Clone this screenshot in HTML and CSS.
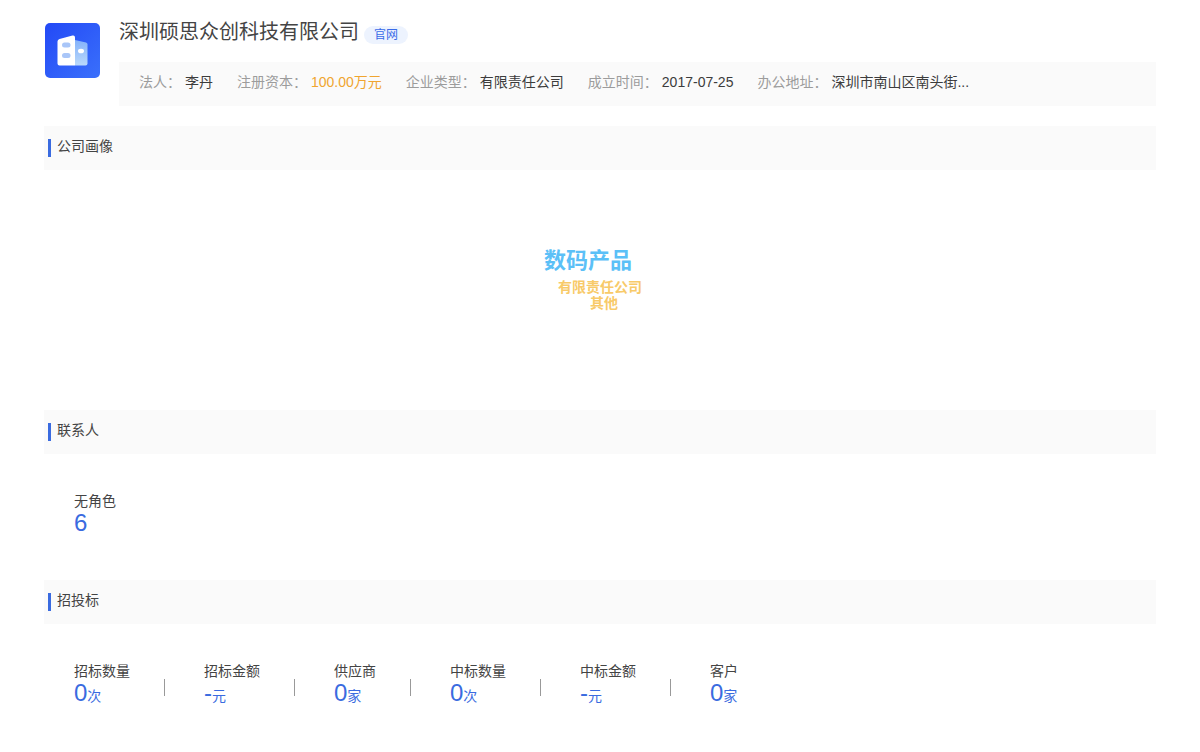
FILE: index.html
```html
<!DOCTYPE html>
<html lang="zh-CN">
<head>
<meta charset="utf-8">
<meta name="viewport" content="width=device-width, initial-scale=1">
<title>深圳硕思众创科技有限公司</title>
<link rel="stylesheet" href="styles.css">
</head>
<body>
<main class="page">
  <header class="company">
    <svg class="logo" viewBox="0 0 56 56" aria-hidden="true">
      <defs>
        <linearGradient id="tile" x1="0" y1="0" x2="1" y2="1">
          <stop offset="0" stop-color="#2349f6"/>
          <stop offset="1" stop-color="#3a70fb"/>
        </linearGradient>
        <linearGradient id="wing" x1="0" y1="0" x2="0" y2="1">
          <stop offset="0" stop-color="#84b2fa"/>
          <stop offset="1" stop-color="#b9d8fb"/>
        </linearGradient>
      </defs>
      <rect x="1" y="1" width="55" height="55" rx="5" fill="url(#tile)"/>
      <path d="M31 18 42 20.500Q43.500 21 43.500 22.500V41.500Q43.500 43.500 41.500 43.500H31Z" fill="url(#wing)"/>
      <path d="M15.500 17 28.500 13.500Q31 13 31 15.500V43.500H15.500Q13.500 43.500 13.500 41.500V19.500Q13.500 17.500 15.500 17Z" fill="#fff"/>
      <rect x="18" y="20.500" width="8.500" height="5" rx="2.500" fill="#a9c6f8"/>
      <rect x="18" y="31" width="8.500" height="5" rx="2.500" fill="#a9c6f8"/>
      <ellipse cx="37" cy="29" rx="3" ry="2.300" fill="#fff"/>
    </svg>
    <div class="company-body">
      <div class="title-row">
        <h1 class="title">深圳硕思众创科技有限公司</h1>
        <a class="site-link" href="#">官网</a>
      </div>
      <dl class="meta">
        <div class="meta-item"><dt>法人：</dt><dd>李丹</dd></div>
        <div class="meta-item"><dt>注册资本：</dt><dd class="money">100.00万元</dd></div>
        <div class="meta-item"><dt>企业类型：</dt><dd>有限责任公司</dd></div>
        <div class="meta-item"><dt>成立时间：</dt><dd>2017-07-25</dd></div>
        <div class="meta-item"><dt>办公地址：</dt><dd>深圳市南山区南头街...</dd></div>
      </dl>
    </div>
  </header>

  <section>
    <h2 class="section-title">公司画像</h2>
    <div class="cloud">
      <span class="word word-product">数码产品</span>
      <span class="word word-type">有限责任公司</span>
      <span class="word word-other">其他</span>
    </div>
  </section>

  <section>
    <h2 class="section-title">联系人</h2>
    <dl class="stats">
      <div class="stat"><dt>无角色</dt><dd>6</dd></div>
    </dl>
  </section>

  <section>
    <h2 class="section-title">招投标</h2>
    <dl class="stats">
      <div class="stat"><dt>招标数量</dt><dd>0<small>次</small></dd></div>
      <div class="stat"><dt>招标金额</dt><dd>-<small>元</small></dd></div>
      <div class="stat"><dt>供应商</dt><dd>0<small>家</small></dd></div>
      <div class="stat"><dt>中标数量</dt><dd>0<small>次</small></dd></div>
      <div class="stat"><dt>中标金额</dt><dd>-<small>元</small></dd></div>
      <div class="stat"><dt>客户</dt><dd>0<small>家</small></dd></div>
    </dl>
  </section>
</main>
</body>
</html>
```
FILE: styles.css
```css
* {
  box-sizing: border-box;
  margin: 0;
  padding: 0;
}

body {
  background: #fff;
  color: #444;
  font: 14px/20px "Liberation Sans", "Noto Sans CJK SC", sans-serif;
}

.page {
  padding: 16px 44px 0;
}

.company {
  display: flex;
  gap: 19px;
  margin-bottom: 20px;
}

.logo {
  flex: none;
  width: 56px;
  height: 56px;
  margin-top: 6px;
}

.company-body {
  flex: 1;
  min-width: 0;
}

.title-row {
  display: flex;
  align-items: flex-start;
  gap: 5px;
  margin-bottom: 14px;
}

.title {
  font-size: 20px;
  font-weight: 400;
  line-height: 32px;
}

.site-link {
  margin-top: 10px;
  padding: 0 10px;
  border-radius: 9px;
  background: #edf3fe;
  color: #3a6be8;
  font-size: 12px;
  line-height: 18px;
  text-decoration: none;
}

.meta {
  display: flex;
  flex-wrap: wrap;
  column-gap: 24px;
  padding: 10px 20px 14px;
  background: #fafafa;
}

.meta-item {
  display: flex;
  gap: 4px;
}

.meta dt {
  color: #9c9c9c;
}

.meta dd {
  color: #3c3c3c;
}

.meta .money {
  color: #f0a52f;
}

.section-title {
  display: flex;
  align-items: flex-start;
  gap: 6px;
  padding: 10px 4px 13px;
  background: #fafafa;
  font-size: 14px;
  font-weight: 400;
}

.section-title::before {
  width: 3px;
  height: 18px;
  margin-top: 3px;
  background: #3a6be0;
  content: "";
}

.cloud {
  position: relative;
  height: 240px;
}

.word {
  position: absolute;
  left: 50%;
  font-weight: 700;
  line-height: 16px;
  white-space: nowrap;
}

.word-product {
  top: 79px;
  margin-left: -56px;
  color: #5bc0f7;
  font-size: 22px;
  line-height: 24px;
}

.word-type {
  top: 109px;
  margin-left: -42px;
  color: #f8ca69;
}

.word-other {
  top: 125px;
  margin-left: -10px;
  color: #f8ca69;
}

.stats {
  display: flex;
  flex-wrap: wrap;
  padding: 37px 30px 45px;
}

.stat:not(:last-child) {
  padding-right: 35px;
  margin-right: 39px;
  background: linear-gradient(#999, #999) right 18px / 1px 17px no-repeat;
}

.stat dd {
  color: #3a6be0;
  font-size: 24px;
  line-height: 24px;
}

.stat small {
  font-size: 14px;
}
```
